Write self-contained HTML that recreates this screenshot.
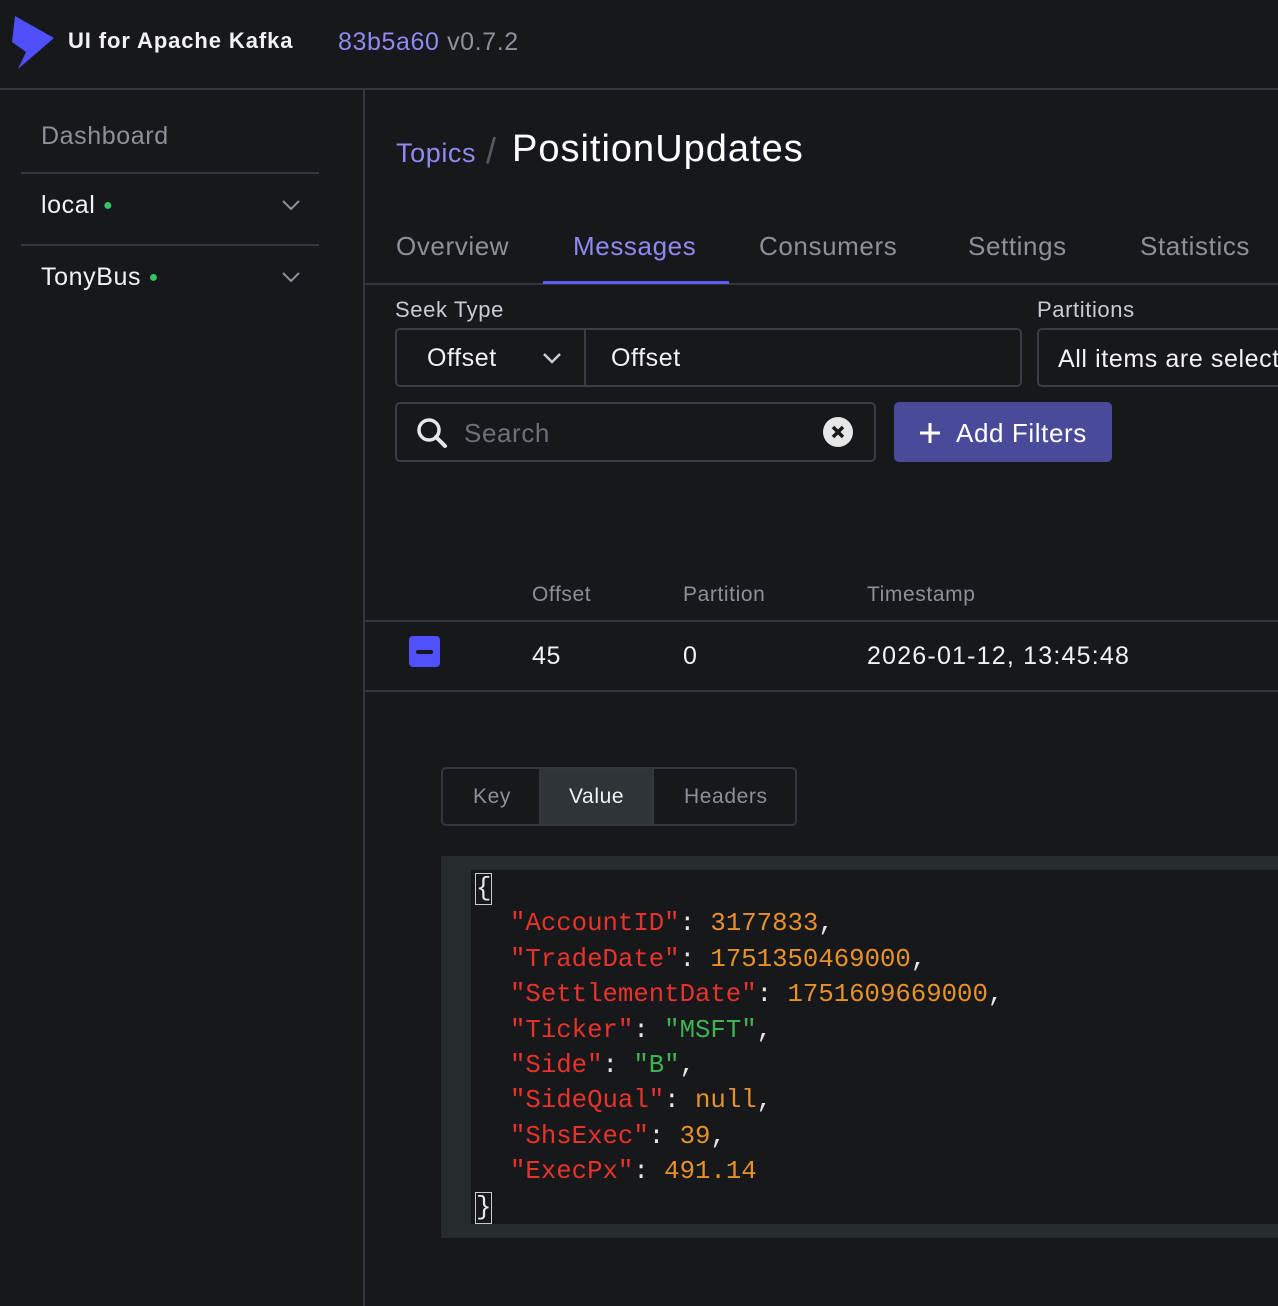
<!DOCTYPE html>
<html><head><meta charset="utf-8"><style>
*{box-sizing:border-box;margin:0;padding:0}
body{width:1278px;height:1306px;background:#17181b;font-family:"Liberation Sans",sans-serif;position:relative;overflow:hidden;color:#fff;letter-spacing:0.6px}
.a{position:absolute;white-space:nowrap}
.line{position:absolute;background:#33373c}
.mono{font-family:"Liberation Mono",monospace;font-size:25.7px;letter-spacing:0}
.k{color:#e8332a}.n{color:#e8912a}.s{color:#3fb34f}.p{color:#e6e6e6}
</style></head><body>
<svg class="a" style="left:12px;top:14px" width="44" height="56" viewBox="0 0 44 56"><path d="M3 2 L42 24 L6 55 L14 38 L0 28 Z" fill="#4f4ffb"/></svg>
<div class="a" style="left:68px;top:28px;font-size:22px;font-weight:bold;color:#f2f2f2;letter-spacing:0.9px">UI for Apache Kafka</div>
<div class="a" style="left:338px;top:28px;font-size:25px;color:#8f89f0">83b5a60 <span style="color:#8c9196">v0.7.2</span></div>
<div class="line" style="left:0;top:88px;width:1278px;height:2px"></div>
<div class="line" style="left:363px;top:90px;width:2px;height:1216px"></div>
<div class="a" style="left:41px;top:122px;font-size:25px;color:#8c9196">Dashboard</div>
<div class="line" style="left:21px;top:172px;width:298px;height:2px"></div>
<div class="a" style="left:41px;top:191px;font-size:25px;color:#f2f2f2">local <span style="color:#35c464;font-size:16px;vertical-align:3px">●</span></div>
<svg class="a" style="left:281px;top:198px" width="20" height="14"><path d="M2 3 L10 11 L18 3" stroke="#8c9196" stroke-width="2" fill="none"/></svg>
<div class="line" style="left:21px;top:244px;width:298px;height:2px"></div>
<div class="a" style="left:41px;top:263px;font-size:25px;color:#f2f2f2">TonyBus <span style="color:#35c464;font-size:16px;vertical-align:3px">●</span></div>
<svg class="a" style="left:281px;top:270px" width="20" height="14"><path d="M2 3 L10 11 L18 3" stroke="#8c9196" stroke-width="2" fill="none"/></svg>
<div class="a" style="left:396px;top:138px;font-size:27px;color:#8f89f0">Topics</div>
<div class="a" style="left:486px;top:130px;font-size:36px;color:#555a60">/</div>
<div class="a" style="left:512px;top:128px;font-size:38px;color:#fff;letter-spacing:1px">PositionUpdates</div>
<div class="a" style="left:396px;top:231px;font-size:26px;color:#8c9196">Overview</div>
<div class="a" style="left:573px;top:231px;font-size:26px;color:#8f89f0">Messages</div>
<div class="a" style="left:759px;top:231px;font-size:26px;color:#8c9196">Consumers</div>
<div class="a" style="left:968px;top:231px;font-size:26px;color:#8c9196">Settings</div>
<div class="a" style="left:1140px;top:231px;font-size:26px;color:#8c9196">Statistics</div>
<div class="line" style="left:365px;top:283px;width:913px;height:2px"></div>
<div class="a" style="left:543px;top:281px;width:186px;height:3px;background:#5b5bf5"></div>
<div class="a" style="left:395px;top:297px;font-size:22px;color:#c8ccd0">Seek Type</div>
<div class="a" style="left:1037px;top:297px;font-size:22px;color:#c8ccd0">Partitions</div>
<div class="a" style="left:395px;top:328px;width:627px;height:59px;border:2px solid #3a3e43;border-radius:5px"></div>
<div class="a" style="left:584px;top:328px;width:2px;height:59px;background:#3a3e43"></div>
<div class="a" style="left:427px;top:344px;font-size:25px;color:#f2f2f2">Offset</div>
<svg class="a" style="left:542px;top:351px" width="20" height="14"><path d="M2 3 L10 11 L18 3" stroke="#c8ccd0" stroke-width="2.5" fill="none"/></svg>
<div class="a" style="left:611px;top:344px;font-size:25px;color:#f2f2f2">Offset</div>
<div class="a" style="left:1037px;top:328px;width:260px;height:59px;border:2px solid #3a3e43;border-radius:5px"></div>
<div class="a" style="left:1058px;top:345px;font-size:25px;color:#f2f2f2">All items are selected</div>
<div class="a" style="left:395px;top:402px;width:481px;height:60px;border:2px solid #3a3e43;border-radius:5px"></div>
<svg class="a" style="left:415px;top:416px" width="34" height="34"><circle cx="14" cy="14" r="10" stroke="#e6e6e6" stroke-width="3.5" fill="none"/><path d="M21 21 L30 30" stroke="#e6e6e6" stroke-width="4" stroke-linecap="round"/></svg>
<div class="a" style="left:464px;top:418px;font-size:26px;color:#6c7176">Search</div>
<svg class="a" style="left:822px;top:416px" width="32" height="32"><circle cx="16" cy="16" r="15" fill="#e6e6e6"/><path d="M11 11 L21 21 M21 11 L11 21" stroke="#17181b" stroke-width="3.5"/></svg>
<div class="a" style="left:894px;top:402px;width:218px;height:60px;background:#4a4a9a;border-radius:5px"></div>
<svg class="a" style="left:918px;top:421px" width="24" height="24"><path d="M12 2 V22 M2 12 H22" stroke="#fff" stroke-width="3"/></svg>
<div class="a" style="left:956px;top:418px;font-size:26px;color:#fff">Add Filters</div>
<div class="a" style="left:532px;top:583px;font-size:21px;color:#8c9196">Offset</div>
<div class="a" style="left:683px;top:583px;font-size:21px;color:#8c9196">Partition</div>
<div class="a" style="left:867px;top:583px;font-size:21px;color:#8c9196">Timestamp</div>
<div class="line" style="left:365px;top:620px;width:913px;height:2px"></div>
<div class="a" style="left:409px;top:636px;width:31px;height:31px;background:#5151fb;border-radius:4px"></div>
<div class="a" style="left:416px;top:650px;width:17px;height:4px;background:#17181b;border-radius:2px"></div>
<div class="a" style="left:532px;top:642px;font-size:25px;color:#f2f2f2">45</div>
<div class="a" style="left:683px;top:642px;font-size:25px;color:#f2f2f2">0</div>
<div class="a" style="left:867px;top:642px;font-size:25px;color:#f2f2f2;letter-spacing:1.2px">2026-01-12, 13:45:48</div>
<div class="line" style="left:365px;top:690px;width:913px;height:2px"></div>
<div class="a" style="left:441px;top:767px;width:356px;height:59px;border:2px solid #33373c;border-radius:5px;overflow:hidden">
<div class="a" style="left:96px;top:0;width:115px;height:57px;background:#2e3438;border-left:2px solid #33373c;border-right:2px solid #33373c"></div></div>
<div class="a" style="left:473px;top:785px;font-size:21px;color:#8c9196">Key</div>
<div class="a" style="left:569px;top:785px;font-size:21px;color:#f2f2f2">Value</div>
<div class="a" style="left:684px;top:785px;font-size:21px;color:#8c9196">Headers</div>
<div class="a" style="left:441px;top:856px;width:837px;height:382px;background:#262b2e"></div>
<div class="a" style="left:471px;top:870px;width:807px;height:354px;background:#17181b"></div>
<div class="a mono" style="left:476px;top:871px;line-height:35.4px">
<div class="p" style="outline:1.5px solid #ccc;display:inline-block;line-height:30px">{</div>
<div style="padding-left:34px"><span class="k">"AccountID"</span><span class="p">: </span><span class="n">3177833</span><span class="p">,</span></div>
<div style="padding-left:34px"><span class="k">"TradeDate"</span><span class="p">: </span><span class="n">1751350469000</span><span class="p">,</span></div>
<div style="padding-left:34px"><span class="k">"SettlementDate"</span><span class="p">: </span><span class="n">1751609669000</span><span class="p">,</span></div>
<div style="padding-left:34px"><span class="k">"Ticker"</span><span class="p">: </span><span class="s">"MSFT"</span><span class="p">,</span></div>
<div style="padding-left:34px"><span class="k">"Side"</span><span class="p">: </span><span class="s">"B"</span><span class="p">,</span></div>
<div style="padding-left:34px"><span class="k">"SideQual"</span><span class="p">: </span><span class="n">null</span><span class="p">,</span></div>
<div style="padding-left:34px"><span class="k">"ShsExec"</span><span class="p">: </span><span class="n">39</span><span class="p">,</span></div>
<div style="padding-left:34px"><span class="k">"ExecPx"</span><span class="p">: </span><span class="n">491.14</span></div>
<div class="p" style="outline:1.5px solid #ccc;display:inline-block;line-height:30px">}</div>
</div>
</body></html>
